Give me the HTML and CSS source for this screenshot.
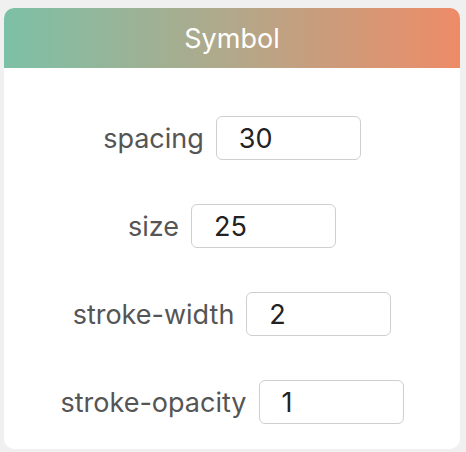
FILE: index.html
```html
<!DOCTYPE html>
<html>
<head>
<meta charset="utf-8">
<link rel="stylesheet" href="styles.css">
</head>
<body>
<div class="card">
  <div class="header">Symbol</div>
  <div class="body">
    <div class="row"><label class="label">spacing</label><input class="field" type="text" value="30"></div>
    <div class="row"><label class="label">size</label><input class="field" type="text" value="25"></div>
    <div class="row"><label class="label">stroke-width</label><input class="field" type="text" value="2"></div>
    <div class="row"><label class="label">stroke-opacity</label><input class="field" type="text" value="1"></div>
  </div>
</div>
</body>
</html>
```
FILE: styles.css
```css
html, body {
  margin: 0;
  padding: 0;
  background: #f0f0f0;
}
body {
  padding: 8px 6px 3px 4px;
  font-family: Inter, "Noto Sans", sans-serif;
}
.card {
  background: #ffffff;
  border-radius: 10px;
  overflow: hidden;
  height: 441px;
  display: flex;
  flex-direction: column;
}
.header {
  height: 60px;
  flex: none;
  display: flex;
  align-items: center;
  justify-content: center;
  color: #ffffff;
  font-size: 27px;
  background: linear-gradient(to right, #7cc0a6, #b2a88a 50%, #ee8b67);
}
.body {
  display: flex;
  flex-direction: column;
  align-items: center;
  gap: 44px;
  padding-top: 48px;
}
.row {
  display: flex;
  align-items: center;
  gap: 12px;
  height: 44px;
}
.label {
  color: #555555;
  font-size: 27px;
}
.field {
  box-sizing: border-box;
  width: 145px;
  height: 44px;
  margin: 0;
  border: 1px solid #cfcfcf;
  border-radius: 6px;
  padding: 0 0 0 22px;
  font-family: Inter, "Noto Sans", sans-serif;
  font-size: 27px;
  color: #222222;
  background: #ffffff;
  outline: none;
}
```
